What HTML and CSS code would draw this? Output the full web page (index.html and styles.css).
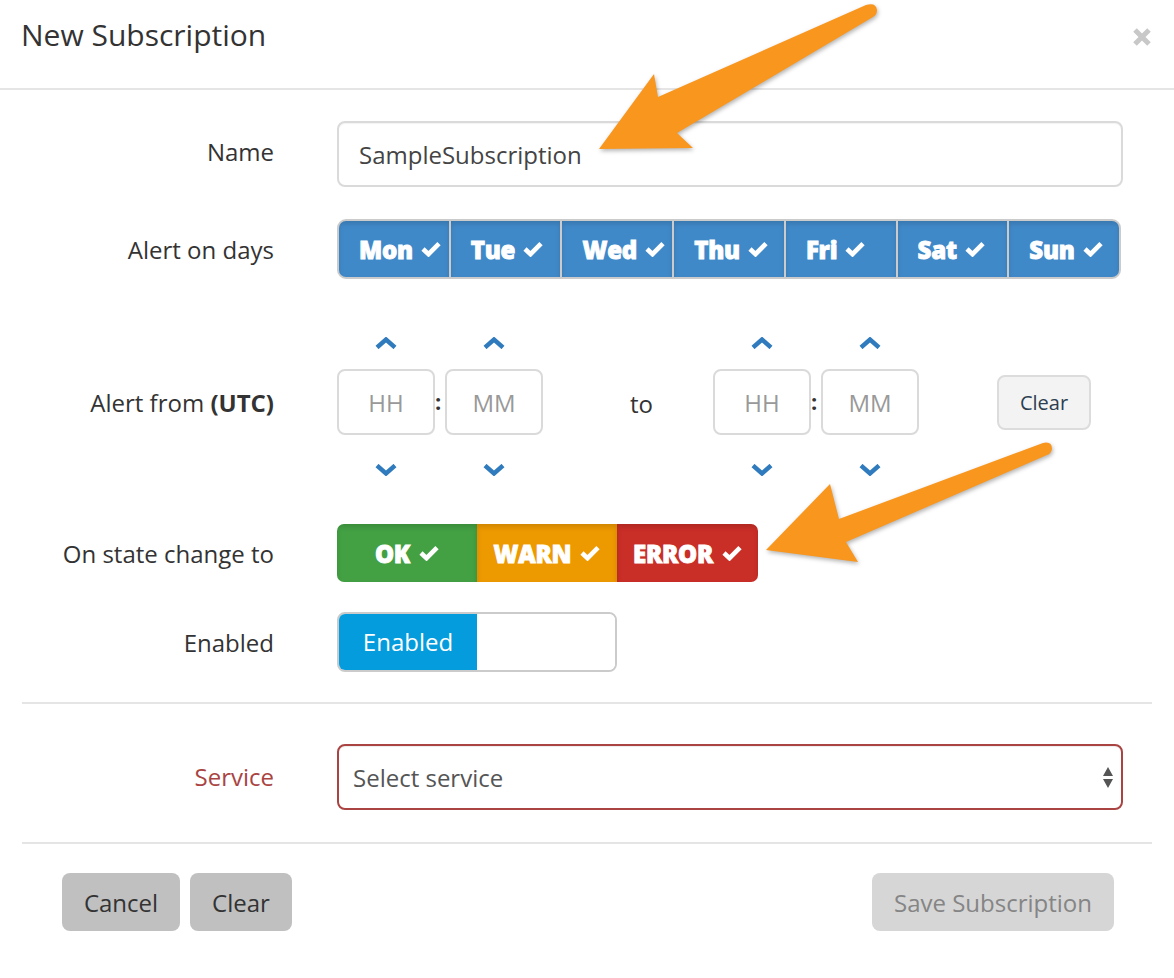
FILE: index.html
```html
<!DOCTYPE html>
<html>
<head>
<meta charset="utf-8">
<link rel="stylesheet" href="styles.css">
</head>
<body>
<div class="modal">
  <div class="modal-header">
    <h4 class="modal-title">New Subscription</h4>
    <button class="close" aria-label="Close">
      <svg width="20" height="18" viewBox="0 0 20 18"><path d="M3 2 L17 16 M17 2 L3 16" stroke="#c8c8c8" stroke-width="5" fill="none"/></svg>
    </button>
  </div>

  <div class="modal-body">
    <div class="form-row name-row">
      <label class="form-label name-label">Name</label>
      <div class="control">
        <input class="text-input" type="text" value="SampleSubscription">
      </div>
    </div>

    <div class="form-row days-row">
      <label class="form-label">Alert on days</label>
      <div class="control">
        <div class="days">
          <button class="day"><span class="lbl">Mon</span><svg class="check" viewBox="0 0 20 16"><polyline points="2,8 7.5,13.2 18,2.6"/></svg></button>
          <button class="day"><span class="lbl">Tue</span><svg class="check" viewBox="0 0 20 16"><polyline points="2,8 7.5,13.2 18,2.6"/></svg></button>
          <button class="day"><span class="lbl">Wed</span><svg class="check" viewBox="0 0 20 16"><polyline points="2,8 7.5,13.2 18,2.6"/></svg></button>
          <button class="day"><span class="lbl">Thu</span><svg class="check" viewBox="0 0 20 16"><polyline points="2,8 7.5,13.2 18,2.6"/></svg></button>
          <button class="day"><span class="lbl">Fri</span><svg class="check" viewBox="0 0 20 16"><polyline points="2,8 7.5,13.2 18,2.6"/></svg></button>
          <button class="day"><span class="lbl">Sat</span><svg class="check" viewBox="0 0 20 16"><polyline points="2,8 7.5,13.2 18,2.6"/></svg></button>
          <button class="day"><span class="lbl">Sun</span><svg class="check" viewBox="0 0 20 16"><polyline points="2,8 7.5,13.2 18,2.6"/></svg></button>
        </div>
      </div>
    </div>

    <div class="form-row time-row">
      <label class="form-label time-label">Alert from <b>(UTC)</b></label>
      <div class="control time-control">
        <div class="picker">
          <div class="pcol">
            <a class="chev up"><svg viewBox="0 0 22 12"><polyline points="2,10.5 11,2.5 20,10.5"/></svg></a>
            <input class="t-input" type="text" placeholder="HH">
            <a class="chev down"><svg viewBox="0 0 22 12"><polyline points="2,1.5 11,9.5 20,1.5"/></svg></a>
          </div>
          <div class="colon">:</div>
          <div class="pcol">
            <a class="chev up"><svg viewBox="0 0 22 12"><polyline points="2,10.5 11,2.5 20,10.5"/></svg></a>
            <input class="t-input" type="text" placeholder="MM">
            <a class="chev down"><svg viewBox="0 0 22 12"><polyline points="2,1.5 11,9.5 20,1.5"/></svg></a>
          </div>
        </div>
        <div class="to">to</div>
        <div class="picker">
          <div class="pcol">
            <a class="chev up"><svg viewBox="0 0 22 12"><polyline points="2,10.5 11,2.5 20,10.5"/></svg></a>
            <input class="t-input" type="text" placeholder="HH">
            <a class="chev down"><svg viewBox="0 0 22 12"><polyline points="2,1.5 11,9.5 20,1.5"/></svg></a>
          </div>
          <div class="colon">:</div>
          <div class="pcol">
            <a class="chev up"><svg viewBox="0 0 22 12"><polyline points="2,10.5 11,2.5 20,10.5"/></svg></a>
            <input class="t-input" type="text" placeholder="MM">
            <a class="chev down"><svg viewBox="0 0 22 12"><polyline points="2,1.5 11,9.5 20,1.5"/></svg></a>
          </div>
        </div>
        <button class="clear-small">Clear</button>
      </div>
    </div>

    <div class="form-row state-row">
      <label class="form-label">On state change to</label>
      <div class="control">
        <div class="states">
          <button class="state ok"><span class="lbl">OK</span><svg class="check" viewBox="0 0 20 16"><polyline points="2,8 7.5,13.2 18,2.6"/></svg></button>
          <button class="state warn"><span class="lbl">WARN</span><svg class="check" viewBox="0 0 20 16"><polyline points="2,8 7.5,13.2 18,2.6"/></svg></button>
          <button class="state error"><span class="lbl">ERROR</span><svg class="check" viewBox="0 0 20 16"><polyline points="2,8 7.5,13.2 18,2.6"/></svg></button>
        </div>
      </div>
    </div>

    <div class="form-row enabled-row">
      <label class="form-label">Enabled</label>
      <div class="control">
        <div class="toggle">
          <span class="toggle-on">Enabled</span>
          <span class="toggle-off"></span>
        </div>
      </div>
    </div>

    <hr class="divider">

    <div class="form-row service-row">
      <label class="form-label error-label">Service</label>
      <div class="control">
        <div class="select-wrap">
          <select class="select">
            <option>Select service</option>
          </select>
          <svg class="select-arrows" width="10" height="22" viewBox="0 0 10 22"><path d="M5 0 L10 9 L0 9 Z M0 12 L10 12 L5 21 Z" fill="#555"/></svg>
        </div>
      </div>
    </div>

    <hr class="divider divider-2">
  </div>

  <div class="modal-footer">
    <div class="footer-left">
      <button class="btn btn-gray">Cancel</button>
      <button class="btn btn-gray">Clear</button>
    </div>
    <button class="btn btn-save">Save Subscription</button>
  </div>
</div>

<svg class="annotations" width="1174" height="978" viewBox="0 0 1174 978">
  <path class="arrow" d="M599,149 L654,74 L658,97 L866,5 Q876,2 877,10 Q877,15 873,17 L677,133 L693,148 Z"/>
  <path class="arrow" d="M766,550 L830,484 L839,519 L1043,443 Q1052,441 1052,449 Q1051,454 1047,455 L846,542 L858,562 Z"/>
</svg>
</body>
</html>
```

FILE: styles.css
```css
* { box-sizing: border-box; }

html, body {
  margin: 0;
  padding: 0;
  background: #ffffff;
}

body {
  font-family: "Open Sans", "DejaVu Sans", sans-serif;
  font-size: 24px;
  color: #333333;
  width: 1174px;
  height: 978px;
  position: relative;
  overflow: hidden;
}

.modal {
  width: 1174px;
}

.modal-header {
  height: 90px;
  border-bottom: 2px solid #e5e5e5;
  display: flex;
  justify-content: space-between;
  align-items: flex-start;
  padding: 14px 22px 0 21px;
}

.modal-title {
  margin: 0;
  font-size: 30px;
  font-weight: 400;
  line-height: 41px;
  color: #333;
}

.close {
  border: 0;
  background: none;
  padding: 0;
  margin-top: 14px;
  width: 20px;
  height: 18px;
  display: flex;
}

.modal-body {
  padding: 31px 22px 0 22px;
}

.form-row {
  display: flex;
  align-items: center;
}

.form-label {
  width: 252px;
  text-align: right;
  font-size: 24px;
  color: #333;
  flex: none;
}
.name-label { margin-bottom: 5px; }

.control {
  margin-left: 63px;
  width: 786px;
  flex: none;
}

/* name */
.name-row { height: 66px; }
.text-input {
  width: 786px;
  height: 66px;
  border: 2px solid #dadada;
  border-radius: 8px;
  padding: 0 0 0 20px;
  font-family: "Open Sans", sans-serif;
  font-size: 24px;
  color: #444;
  box-shadow: inset 0 1px 1px rgba(0,0,0,.05);
  outline: none;
}

/* days */
.days-row { margin-top: 32px; height: 60px; }
.days {
  width: 784px;
  height: 60px;
  display: flex;
  border: 2px solid #cbcbcb;
  border-radius: 9px;
  overflow: hidden;
  background: #cbcbcb;
}
.day {
  flex: 1;
  border: 0;
  margin: 0;
  margin-left: 2px;
  background: #4089c9;
  box-shadow: inset 0 3px 5px rgba(0,0,0,.13);
  color: #fff;
  font-family: "Open Sans", sans-serif;
  font-weight: 800;
  font-size: 24px;
  display: flex;
  align-items: center;
  justify-content: flex-start;
  padding: 0 0 0 20px;
  white-space: nowrap;
}
.day:first-child { margin-left: 0; }

.lbl {
  -webkit-text-stroke: 0.9px #fff;
  letter-spacing: -0.2px;
}

.check {
  width: 20px;
  height: 16px;
  margin-left: 8px;
  fill: none;
  stroke: #fff;
  stroke-width: 4.6;
  flex: none;
}

/* time */
.time-row { margin-top: 58px; }
.time-label { margin-bottom: 8px; }
.time-control {
  display: flex;
  align-items: center;
}
.picker {
  display: flex;
  align-items: flex-start;
}
.pcol {
  width: 98px;
  display: flex;
  flex-direction: column;
  align-items: center;
}
.chev {
  display: flex;
  justify-content: center;
  width: 98px;
}
.chev svg {
  width: 22px;
  height: 12px;
  fill: none;
  stroke: #2f7bbd;
  stroke-width: 4.4;
}
.chev.up { height: 32px; align-items: flex-start; }
.chev.down { height: 41px; align-items: flex-end; }

.t-input {
  width: 98px;
  height: 66px;
  border: 2px solid #dadada;
  border-radius: 8px;
  text-align: center;
  font-family: "Open Sans", sans-serif;
  font-size: 24px;
  padding: 0;
  outline: none;
}
.t-input::placeholder { color: #999; }

.colon {
  width: 10px;
  height: 66px;
  margin-top: 32px;
  line-height: 64px;
  font-weight: 700;
  font-size: 22px;
  padding-left: 0;
}

.to {
  width: 170px;
  padding-left: 87px;
  font-size: 24px;
  color: #333;
  margin-top: -6px;
}

.clear-small {
  margin-left: 78px;
  width: 94px;
  height: 55px;
  border: 2px solid #dcdcdc;
  border-radius: 8px;
  background: #f3f3f3;
  font-family: "Open Sans", sans-serif;
  font-size: 20px;
  color: #2c3e50;
  padding: 0;
  margin-top: -9px;
}

/* states */
.state-row { margin-top: 48px; height: 58px; }
.states {
  display: flex;
  width: 421px;
  height: 58px;
  border-radius: 7px;
  overflow: hidden;
}
.state {
  width: 140px;
  border: 0;
  margin: 0;
  color: #fff;
  font-family: "Open Sans", sans-serif;
  font-weight: 800;
  font-size: 24px;
  display: flex;
  align-items: center;
  justify-content: center;
  box-shadow: inset 0 3px 5px rgba(0,0,0,.13);
  padding: 0;
  white-space: nowrap;
}
.state .check { margin-left: 9px; }
.state.ok { background: #43a043; }
.state.warn { background: #ed9900; }
.state.error { background: #c92e27; width: 141px; }

/* enabled */
.enabled-row { margin-top: 30px; height: 60px; }
.toggle {
  width: 280px;
  height: 60px;
  border: 2px solid #cbcbcb;
  border-radius: 8px;
  overflow: hidden;
  display: flex;
}
.toggle-on {
  width: 138px;
  background: #049cdc;
  color: #fff;
  font-size: 24px;
  display: flex;
  align-items: center;
  justify-content: center;
  padding-bottom: 2px;
}
.toggle-off {
  flex: 1;
  background: #fff;
}

.divider {
  margin: 30px 0 0 0;
  border: 0;
  height: 2px;
  background: #e5e5e5;
  width: 1130px;
}

/* service */
.service-row { margin-top: 40px; height: 66px; }
.error-label { color: #a94442; margin-bottom: 2px; }
.select-wrap {
  position: relative;
  width: 786px;
  height: 66px;
}
.select {
  width: 786px;
  height: 66px;
  appearance: none;
  -webkit-appearance: none;
  border: 2px solid #a94442;
  border-radius: 8px;
  background: #fff;
  padding: 0 0 0 14px;
  font-family: "Open Sans", sans-serif;
  font-size: 24px;
  color: #555;
  outline: none;
  box-shadow: inset 0 1px 1px rgba(0,0,0,.075);
}
.select-arrows {
  position: absolute;
  right: 10px;
  top: 23px;
}

.divider-2 { margin-top: 32px; }

/* footer */
.modal-footer {
  display: flex;
  justify-content: space-between;
  align-items: center;
  padding: 29px 60px 0 62px;
}
.footer-left {
  display: flex;
  gap: 10px;
}
.btn {
  height: 58px;
  border: 0;
  border-radius: 8px;
  font-family: "Open Sans", sans-serif;
  font-size: 24px;
  padding: 0;
}
.btn-gray {
  background: #c0c0c0;
  color: #333;
}
.footer-left .btn-gray:first-child { width: 118px; }
.footer-left .btn-gray:last-child { width: 102px; }
.btn-save {
  width: 242px;
  background: #d6d6d6;
  color: #858585;
}

/* annotation arrows */
.annotations {
  position: absolute;
  left: 0;
  top: 0;
  pointer-events: none;
}
.arrow {
  fill: #f8961e;
  filter: drop-shadow(1px 2px 2px rgba(0,0,0,.3));
}
```
